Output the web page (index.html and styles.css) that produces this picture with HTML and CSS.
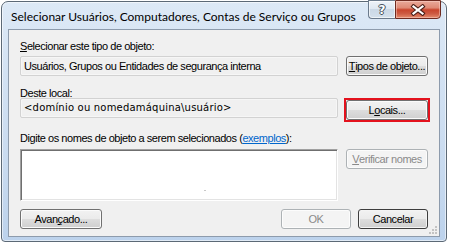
FILE: index.html
```html
<!DOCTYPE html>
<html lang="pt-BR">
<head>
<meta charset="utf-8">
<title>Selecionar Usuários</title>
<link rel="stylesheet" href="styles.css">
</head>
<body>
<div class="window">
  <div class="titlebar">
    <span class="title">Selecionar Usuários, Computadores, Contas de Serviço ou Grupos</span>
    <div class="caption-btns">
      <div class="cbtn help"><span class="help-glyph">?</span></div>
      <div class="cbtn close">
        <svg width="16" height="12" viewBox="0 0 16 12" aria-hidden="true">
          <path d="M3.5 2.5 L12.5 9.5 M12.5 2.5 L3.5 9.5" stroke="#4a1f18" stroke-width="4.2" stroke-linecap="square" fill="none"/>
          <path d="M3.5 2.5 L12.5 9.5 M12.5 2.5 L3.5 9.5" stroke="#ffffff" stroke-width="2.2" stroke-linecap="square" fill="none"/>
        </svg>
      </div>
    </div>
  </div>
  <div class="client">
    <div class="label l1"><u>S</u>elecionar este tipo de objeto:</div>
    <div class="row r1">
      <div class="field ro">Usuários, Grupos ou Entidades de segurança interna</div>
      <div class="btn"><u>T</u>ipos de objeto...</div>
    </div>
    <div class="label l2">Deste <u>l</u>ocal:</div>
    <div class="row r2">
      <div class="field ro loc">&lt;domínio ou nomedamáquina\usuário&gt;</div>
      <div class="btn marked">L<u>o</u>cais...</div>
    </div>
    <div class="label l3">Digite os nomes de objeto a serem selecionados (<span class="link">exemplos</span>):</div>
    <div class="row r3">
      <div class="field multi"><span class="speck"></span></div>
      <div class="btn disabled"><u>V</u>erificar nomes</div>
    </div>
    <div class="row bottom">
      <div class="btn">Avan<u>ç</u>ado...</div>
      <span class="spacer"></span>
      <div class="btn small disabled">OK</div>
      <div class="btn small default">Cancelar</div>
    </div>
    <svg class="grip" width="10" height="10" viewBox="0 0 10 10" aria-hidden="true">
      <rect x="7" y="1" width="2" height="2" fill="#c3c3c3"/>
      <rect x="4" y="4" width="2" height="2" fill="#c3c3c3"/>
      <rect x="7" y="4" width="2" height="2" fill="#c3c3c3"/>
      <rect x="1" y="7" width="2" height="2" fill="#c3c3c3"/>
      <rect x="4" y="7" width="2" height="2" fill="#c3c3c3"/>
      <rect x="7" y="7" width="2" height="2" fill="#c3c3c3"/>
    </svg>
  </div>
</div>
</body>
</html>
```

FILE: styles.css
```css
html, body {
  margin: 0;
  padding: 0;
  background: #ffffff;
}

body {
  font-family: "Liberation Sans", Arial, sans-serif;
  color: #000;
}

.window {
  margin: 1px 0 0 1px;
  width: 446px;
  height: 241px;
  box-sizing: border-box;
  border: 1px solid #5c6976;
  border-radius: 7px 7px 4px 4px;
  background: linear-gradient(to bottom, #dde9f6 0%, #d3e2f3 30%, #c8daef 70%, #bcd2ec 100%);
  box-shadow: inset 0 0 0 1px rgba(255, 255, 255, 0.55);
  padding: 0 6px 4px 6px;
  display: flex;
  flex-direction: column;
}

.titlebar {
  height: 27px;
  display: flex;
  align-items: flex-start;
  flex: none;
}

.title {
  font-family: Lato, "Liberation Sans", sans-serif;
  font-size: 12px;
  line-height: 27px;
  padding-top: 1px;
  margin-left: 3px;
  color: #000;
  white-space: nowrap;
  flex: 1;
}

.caption-btns {
  display: flex;
  margin-top: -2px;
  margin-right: -1px;
}

.cbtn {
  height: 19px;
  box-sizing: border-box;
  border: 1px solid #6b7a8c;
  display: flex;
  align-items: center;
  justify-content: center;
}

.help {
  width: 27px;
  border-right: none;
  border-radius: 0 0 0 4px;
  background: linear-gradient(to bottom, #eef3f9 0%, #dfe8f2 45%, #cbd8e6 50%, #d4e0ec 100%);
  box-shadow: inset 0 0 0 1px rgba(255, 255, 255, 0.6);
}

.help-glyph {
  font-family: "DejaVu Sans", sans-serif;
  font-weight: bold;
  font-size: 12px;
  line-height: 12px;
  color: #ffffff;
  text-shadow: 0 0 1px #3c4652, 1px 0 0 #4a5563, -1px 0 0 #4a5563, 0 1px 0 #4a5563, 0 -1px 0 #4a5563;
}

.close {
  width: 46px;
  border-color: #6e2a20;
  border-radius: 0 0 4px 0;
  background: linear-gradient(to bottom, #e9a99a 0%, #df8a76 40%, #c9452d 52%, #cd5b43 75%, #e58c6d 100%);
  box-shadow: inset 0 0 0 1px rgba(255, 220, 210, 0.45);
}

.client {
  position: relative;
  flex: 1;
  box-sizing: border-box;
  border: 1px solid #8d9bac;
  background: #f0f0f0;
  padding: 11px 11px 0 11px;
  display: flex;
  flex-direction: column;
  font-size: 11px;
  letter-spacing: -0.45px;
}

.label {
  line-height: 10px;
  height: 10px;
  white-space: nowrap;
}

.l2 { margin-top: 12px; }
.l3 { margin-top: 13px; }

.row {
  display: flex;
  gap: 8px;
  align-items: flex-start;
}

.r1 { margin-top: 5px; }
.r2 { margin-top: 0; }
.r3 { margin-top: 6px; }
.bottom { margin-top: 8px; gap: 7px; }

.spacer { flex: 1; }

.field {
  width: 318px;
  box-sizing: border-box;
  flex: none;
}

.ro {
  height: 20px;
  border: 1px solid #d2d2d2;
  border-radius: 2px;
  background: #f0f0f0;
  box-shadow: inset 0 0 0 1px #f6f6f6;
  padding: 0 3px;
  display: flex;
  align-items: center;
  line-height: 12px;
  white-space: nowrap;
}

.loc {
  font-family: "DejaVu Sans", sans-serif;
  font-size: 10px;
  letter-spacing: 0.2px;
  padding-left: 3px;
}

.multi {
  position: relative;
  height: 52px;
  background: #ffffff;
  border-top: 1px solid #a0a0a0;
  border-left: 1px solid #a0a0a0;
  border-right: 1px solid #ffffff;
  border-bottom: 1px solid #ffffff;
  box-shadow: inset 1px 1px 0 #6f6f6f, inset -1px -1px 0 #e3e3e3;
}

.speck {
  position: absolute;
  left: 183px;
  top: 40px;
  width: 2px;
  height: 1px;
  background: #c8c8c8;
}

.btn {
  position: relative;
  width: 82px;
  height: 20px;
  box-sizing: border-box;
  flex: none;
  border: 1px solid #707070;
  border-radius: 3px;
  background: linear-gradient(to bottom, #f2f2f2 0%, #ebebeb 48%, #dddddd 52%, #cfcfcf 100%);
  box-shadow: inset 0 0 0 1px #fbfbfb;
  display: flex;
  align-items: center;
  justify-content: center;
  line-height: 12px;
  white-space: nowrap;
  color: #000;
}

.btn.small { width: 70px; }

.btn.default {
  border-color: #3d3d3d;
  box-shadow: inset 0 0 0 1px #f4f4f4;
}

.btn.disabled {
  border-color: #adb2b5;
  background: #f4f4f4;
  box-shadow: inset 0 0 0 1px #fcfcfc;
  color: #8a8a8a;
}

.btn.marked {
  margin-top: 2px;
}

.btn.marked::after {
  content: "";
  position: absolute;
  top: -3px;
  left: -3px;
  right: -3px;
  bottom: -3px;
  border: 2px solid #e3121d;
  pointer-events: none;
}

.link {
  color: #0066cc;
  text-decoration: underline;
}

.grip {
  position: absolute;
  right: 1px;
  bottom: 1px;
}
```
